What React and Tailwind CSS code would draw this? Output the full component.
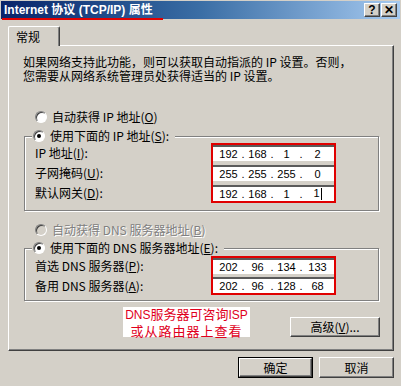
import React from "react";

const FONT = { fontFamily: '"Noto Sans CJK SC", sans-serif' };
const LATIN = { fontFamily: '"Liberation Sans", "Noto Sans CJK SC", sans-serif' };

function Radio({ checked, disabled }) {
  return (
    <span
      className={
        "relative inline-flex items-center justify-center w-[12px] h-[12px] rounded-full border border-t-[#808080] border-l-[#808080] border-b-white border-r-white shadow-[inset_1px_1px_0_#404040] shrink-0 " +
        (disabled ? "bg-[#d4d0c8]" : "bg-white")
      }
    >
      {checked && <span className="w-[4px] h-[4px] rounded-full bg-black" />}
    </span>
  );
}

function IpField({ octets, cursor }) {
  return (
    <div className="flex items-center h-[16px] bg-white border-t-2 border-t-[#5a5a5a] text-[11px] leading-none text-black pl-[3px]" style={LATIN}>
      {octets.map((o, i) => (
        <div key={i} className="flex w-[29px]">
          <span className="flex-1 text-center">
            {o}
            {cursor && i === 3 && <span className="inline-block w-px h-[12px] bg-black align-middle ml-[1px]" />}
          </span>
          {i < 3 && <span className="w-[4px] text-center">.</span>}
        </div>
      ))}
    </div>
  );
}

function Label({ children }) {
  return <div className="h-[16px] flex items-center text-[12px] leading-none whitespace-nowrap">{children}</div>;
}

function Raised({ children, className = "" }) {
  return (
    <div
      className={
        "flex items-center justify-center bg-[#d4d0c8] border border-t-white border-l-white border-b-[#404040] border-r-[#404040] shadow-[inset_-1px_-1px_0_#808080] text-[12px] leading-none " +
        className
      }
    >
      {children}
    </div>
  );
}

export default function App() {
  return (
    <div className="w-[401px] h-[386px] bg-[#d4d0c8] overflow-hidden text-black" style={FONT}>
      {/* Title bar */}
      <div className="relative mx-[1px] mt-[1px] h-[18px] bg-gradient-to-r from-[#0a246a] via-[#3a6ea5] to-[#a6caf0] flex items-center justify-between pl-[3px] pr-[3px]">
        <div className="text-white font-bold text-[12px] leading-none whitespace-nowrap" style={LATIN}>
          Internet 协议 (TCP/IP) 属性
        </div>
        <div className="flex">
          <Raised className="w-[16px] h-[14px] font-bold text-[11px]">
            <span style={LATIN}>?</span>
          </Raised>
          <Raised className="w-[16px] h-[14px] ml-[1px] font-bold text-[12px]">
            <span style={LATIN}>✕</span>
          </Raised>
        </div>
        <div className="absolute left-[1px] top-[17px] w-[161px] h-[2px] bg-[#e00000]" />
      </div>

      {/* Tab */}
      <div className="mt-[7px] ml-[8px] relative z-10 w-[52px] h-[20px] bg-[#d4d0c8] border-t border-l border-white border-r border-r-[#404040] shadow-[inset_-1px_0_0_#808080] rounded-tl-[2px] rounded-tr-[2px] flex items-center pl-[7px] text-[12px] leading-none">
        常规
      </div>

      {/* Panel */}
      <div className="-mt-[1px] ml-[8px] w-[386px] h-[306px] border border-t-white border-l-white border-b-[#404040] border-r-[#404040] shadow-[inset_-1px_-1px_0_#808080] pt-[9px] flex flex-col">
        <div className="pl-[14px] text-[12px] leading-[14px] whitespace-nowrap">
          <div>如果网络支持此功能，则可以获取自动指派的 IP 设置。否则，</div>
          <div>您需要从网络系统管理员处获得适当的 IP 设置。</div>
        </div>

        <div className="mt-[27px] ml-[26px] h-[14px] flex items-center gap-[5px] text-[12px] leading-none">
          <Radio />
          <span>自动获得 IP 地址(<u>O</u>)</span>
        </div>

        <fieldset className="mt-[5px] ml-[15px] w-[355px] min-w-0 border border-[#808080] shadow-[inset_1px_1px_0_#fff,1px_1px_0_#fff] pb-[7px]">
          <legend className="ml-[7px] pl-[1px] pr-[6px] bg-[#d4d0c8] h-[14px] flex items-center gap-[5px] text-[12px] leading-none">
            <Radio checked />
            <span>使用下面的 IP 地址(<u>S</u>):</span>
          </legend>
          <div className="flex">
            <div className="pl-[10px] pt-[2px] flex flex-col gap-[4px] w-[186px]">
              <Label>IP 地址(<u>I</u>):</Label>
              <Label>子网掩码(<u>U</u>):</Label>
              <Label>默认网关(<u>D</u>):</Label>
            </div>
            <div className="w-[125px] border-2 border-[#e00000] flex flex-col gap-[4px] bg-[#d4d0c8]">
              <IpField octets={["192", "168", "1", "2"]} />
              <IpField octets={["255", "255", "255", "0"]} />
              <IpField octets={["192", "168", "1", "1"]} cursor />
            </div>
          </div>
        </fieldset>

        <div className="mt-[12px] ml-[26px] h-[14px] flex items-center gap-[5px] text-[12px] leading-none text-[#808080] [text-shadow:1px_1px_0_#fff]">
          <Radio disabled />
          <span>自动获得 DNS 服务器地址(<u>B</u>)</span>
        </div>

        <fieldset className="mt-[4px] ml-[15px] w-[355px] min-w-0 border border-[#808080] shadow-[inset_1px_1px_0_#fff,1px_1px_0_#fff] pb-[5px]">
          <legend className="ml-[7px] pl-[1px] pr-[6px] bg-[#d4d0c8] h-[14px] flex items-center gap-[5px] text-[12px] leading-none">
            <Radio checked />
            <span>使用下面的 DNS 服务器地址(<u>E</u>):</span>
          </legend>
          <div className="flex mt-[1px]">
            <div className="pl-[10px] pt-[2px] flex flex-col gap-[4px] w-[186px]">
              <Label>首选 DNS 服务器(<u>P</u>):</Label>
              <Label>备用 DNS 服务器(<u>A</u>):</Label>
            </div>
            <div className="w-[125px] border-2 border-[#e00000] flex flex-col gap-[3px] bg-[#d4d0c8]">
              <IpField octets={["202", "96", "134", "133"]} />
              <IpField octets={["202", "96", "128", "68"]} />
            </div>
          </div>
        </fieldset>

        <div className="mt-[6px] flex items-start">
          <div className="ml-[114px] w-[127px] h-[30px] bg-white text-[#e0001c] text-[13px] leading-[15px] flex flex-col items-center justify-center whitespace-nowrap">
            <div>
              <span className="text-[12px]" style={LATIN}>DNS</span>服务器可咨询<span className="text-[12px]" style={LATIN}>ISP</span>
            </div>
            <div className="tracking-[1px]">或从路由器上查看</div>
          </div>
          <Raised className="ml-[40px] mt-[10px] w-[90px] h-[20px]">
            高级(<u>V</u>)...
          </Raised>
        </div>
      </div>

      {/* Bottom buttons */}
      <div className="mt-[6px] flex justify-end pr-[7px] gap-[6px]">
        <div className="w-[75px] h-[21px] border border-black flex">
          <Raised className="flex-1">确定</Raised>
        </div>
        <Raised className="w-[75px] h-[21px]">取消</Raised>
      </div>
    </div>
  );
}
